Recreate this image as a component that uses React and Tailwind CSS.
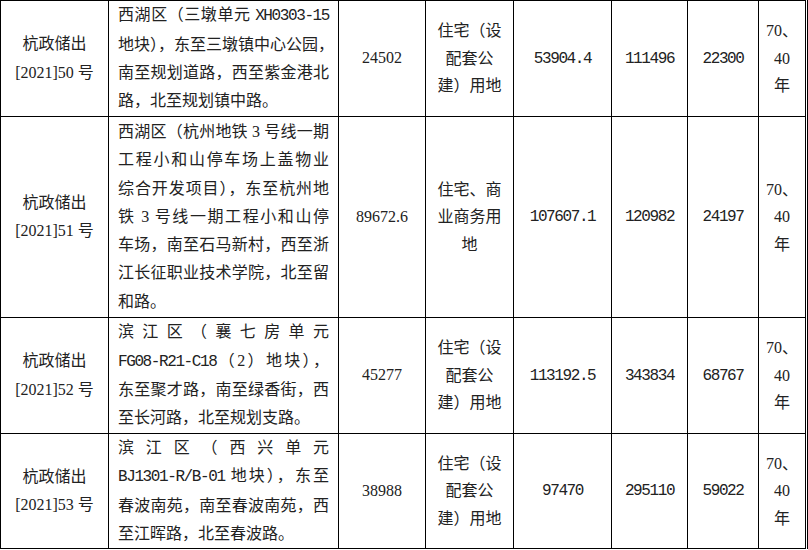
import React from "react"

const FONT = "font-['Liberation_Serif','Noto_Sans_CJK_SC',sans-serif]"
const MONO = "font-['Liberation_Mono','Noto_Sans_CJK_SC',monospace] tracking-[-1.4px]"

const rows = [
  {
    id: "50",
    h: "h-[116px]",
    area: "24502",
    desc: [
      <>西湖区（三墩单元 <span className={MONO}>XH0303-15</span></>,
      "地块），东至三墩镇中心公园，",
      "南至规划道路，西至紫金港北",
      "路，北至规划镇中路。",
    ],
    use: ["住宅（设", "配套公", "建）用地"],
    a: "53904.4",
    b: "111496",
    c: "22300",
  },
  {
    id: "51",
    h: "h-[201px]",
    area: "89672.6",
    desc: [
      "西湖区（杭州地铁 3 号线一期",
      "工程小和山停车场上盖物业",
      "综合开发项目），东至杭州地",
      "铁 3 号线一期工程小和山停",
      "车场，南至石马新村，西至浙",
      "江长征职业技术学院，北至留",
      "和路。",
    ],
    use: ["住宅、商", "业商务用", "地"],
    a: "107607.1",
    b: "120982",
    c: "24197",
  },
  {
    id: "52",
    h: "h-[116px]",
    area: "45277",
    desc: [
      "滨 江 区 （ 襄 七 房 单 元",
      <><span className={MONO}>FG08-R21-C18</span>（2）地块），</>,
      "东至聚才路，南至绿香街，西",
      "至长河路，北至规划支路。",
    ],
    use: ["住宅（设", "配套公", "建）用地"],
    a: "113192.5",
    b: "343834",
    c: "68767",
  },
  {
    id: "53",
    h: "h-[115px]",
    area: "38988",
    desc: [
      "滨 江 区 （ 西 兴 单 元",
      <><span className={MONO}>BJ1301-R/B-01</span> 地块），东至</>,
      "春波南苑，南至春波南苑，西",
      "至江晖路，北至春波路。",
    ],
    use: ["住宅（设", "配套公", "建）用地"],
    a: "97470",
    b: "295110",
    c: "59022",
  },
]

const cell = "border border-black align-middle text-center p-0"

const App = () => {
  return (
    <div className={`w-[808px] h-[550px] bg-white overflow-hidden ${FONT}`}>
      <div className="w-[808px] flex">
        <table className="table-fixed border-collapse w-[805px] text-[16px] leading-[28.3px] text-[#222]">
          <colgroup>
            <col className="w-[108px]" />
            <col className="w-[230px]" />
            <col className="w-[87px]" />
            <col className="w-[88px]" />
            <col className="w-[98px]" />
            <col className="w-[76px]" />
            <col className="w-[71px]" />
            <col className="w-[47px]" />
          </colgroup>
          <tbody>
            {rows.map((row) => (
              <tr key={row.id} className={row.h}>
                <td className={cell}>
                  <div>杭政储出</div>
                  <div>[2021]{row.id} 号</div>
                </td>
                <td className={`${cell} px-[9px] text-left`}>
                  {row.desc.map((line, i) => (
                    <div
                      key={i}
                      className={
                        i < row.desc.length - 1
                          ? "text-justify [text-align-last:justify] whitespace-nowrap"
                          : "whitespace-nowrap"
                      }
                    >
                      {line}
                    </div>
                  ))}
                </td>
                <td className={cell}>{row.area}</td>
                <td className={cell}>
                  {row.use.map((u, i) => (
                    <div key={i} className="leading-[27.5px]">{u}</div>
                  ))}
                </td>
                <td className={cell}>
                  <span className={MONO}>{row.a}</span>
                </td>
                <td className={cell}>
                  <span className={MONO}>{row.b}</span>
                </td>
                <td className={cell}>
                  <span className={MONO}>{row.c}</span>
                </td>
                <td className={cell}>
                  <div className="leading-[27.5px]">70、</div>
                  <div className="leading-[27.5px]">40</div>
                  <div className="leading-[27.5px]">年</div>
                </td>
              </tr>
            ))}
          </tbody>
        </table>
        <div className="w-[3px] h-[549px] border-r border-black"></div>
      </div>
    </div>
  )
}

export default App
